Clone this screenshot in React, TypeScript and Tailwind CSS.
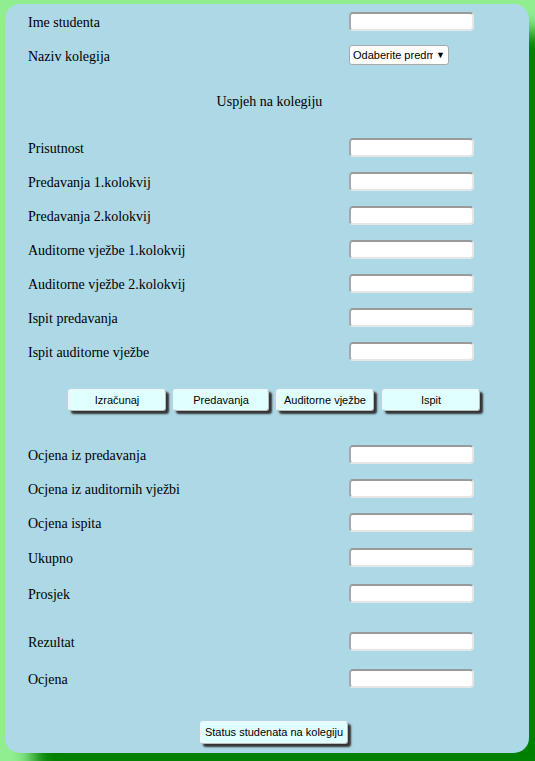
import React from "react";

const serif = { fontFamily: '"Liberation Serif", "Times New Roman", serif' };

function Field() {
  return (
    <div className="h-[19px] w-[125px] rounded-[4px] border-2 border-t-[#9a9a9a] border-l-[#a8a8a8] border-b-[#e6e6e6] border-r-[#e6e6e6] bg-white" />
  );
}

function Row({ label, children, extra }: { label: string; children?: React.ReactNode; extra?: string }) {
  return (
    <div className={`flex h-[34px] items-center ${extra ?? ""}`}>
      <div className="w-[344px] pl-[23px] pt-[2px] text-[14px] text-black">{label}</div>
      {children ?? <Field />}
    </div>
  );
}

function Btn({ label, w }: { label: string; w?: string }) {
  return (
    <div
      className={`flex items-center justify-center rounded-[3px] border border-t-[#f4f4f4] border-l-[#f4f4f4] border-b-[#bbb] border-r-[#bbb] bg-[#E0FFFF] text-[11px] text-black shadow-[3px_3px_2px_#333] ${w ?? "h-[23px] px-[4px]"}`}
      style={{ fontFamily: '"Liberation Sans", Arial, sans-serif' }}
    >
      {label}
    </div>
  );
}

export default function App() {
  return (
    <div className="min-h-[761px] overflow-hidden bg-[#90EE90] pt-[4px]" style={serif}>
      <div className="ml-[5px] w-[524px] rounded-[15px] bg-[#ADD8E6] pb-[9px] shadow-[28px_28px_20px_#008000]">
        <Row label="Ime studenta" />
        <Row label="Naziv kolegija">
          <div
            className="flex h-[20px] w-[100px] items-center overflow-hidden rounded-[3px] border border-[#a9a9a9] bg-white pl-[3px] text-[11px] text-black"
            style={{ fontFamily: '"Liberation Sans", Arial, sans-serif' }}
          >
            <span className="w-[80px] shrink-0 overflow-hidden whitespace-nowrap">Odaberite predm</span>
            <span className="ml-[3px] text-[9px] leading-none">▼</span>
          </div>
        </Row>
        <div className="my-[12px] flex h-[34px] items-center justify-center pl-[5px] text-[14px] text-black">
          Uspjeh na kolegiju
        </div>
        <Row label="Prisutnost" />
        <Row label="Predavanja 1.kolokvij" />
        <Row label="Predavanja 2.kolokvij" />
        <Row label="Auditorne vježbe 1.kolokvij" />
        <Row label="Auditorne vježbe 2.kolokvij" />
        <Row label="Ispit predavanja" />
        <Row label="Ispit auditorne vježbe" />
        <div className="mt-[21px] flex gap-[7px] pl-[63px]">
          <Btn label="Izračunaj" w="h-[22px] w-[98px]" />
          <Btn label="Predavanja" w="h-[22px] w-[96px]" />
          <Btn label="Auditorne vježbe" w="h-[22px] w-[98px]" />
          <Btn label="Ispit" w="h-[22px] w-[98px] ml-[1px]" />
        </div>
        <div className="mt-[26px]">
          <Row label="Ocjena iz predavanja" />
          <Row label="Ocjena iz auditornih vježbi" />
          <Row label="Ocjena ispita" />
          <Row label="Ukupno" extra="mt-[1px]" />
          <Row label="Prosjek" extra="mt-[2px]" />
        </div>
        <div className="mt-[14px]">
          <Row label="Rezultat" />
          <Row label="Ocjena" extra="mt-[3px]" />
        </div>
        <div className="mt-[26px] flex justify-center pl-[14px]">
          <Btn label="Status studenata na kolegiju" />
        </div>
      </div>
    </div>
  );
}
